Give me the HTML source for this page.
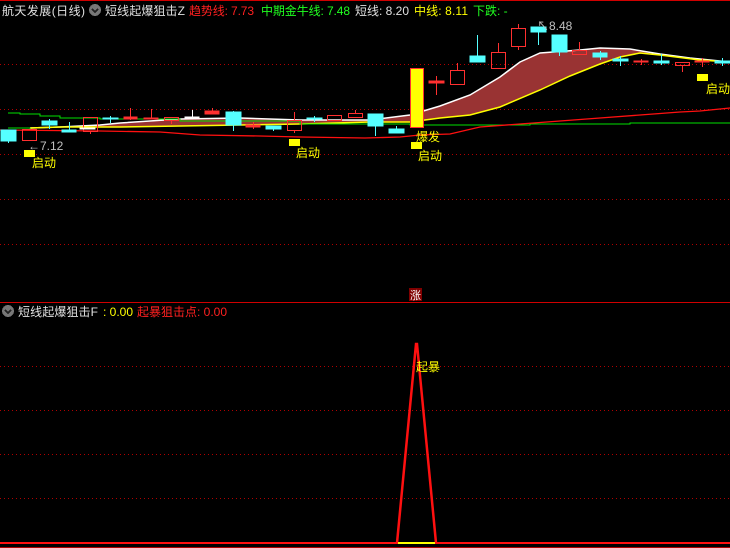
<!DOCTYPE html>
<html><head><meta charset="utf-8"><style>
html,body{margin:0;padding:0;background:#000;width:730px;height:548px;overflow:hidden}
svg text{font-family:"Liberation Sans","Noto Sans CJK SC",sans-serif}
</style></head><body>
<svg width="730" height="548" viewBox="0 0 730 548" xmlns="http://www.w3.org/2000/svg" shape-rendering="crispEdges">
<rect width="730" height="548" fill="#000"/>
<line x1="0" y1="0.5" x2="730" y2="0.5" stroke="#d00000"/>
<g stroke="#b00000" stroke-dasharray="1,3">
<line x1="0" y1="64.5" x2="730" y2="64.5"/><line x1="0" y1="109.5" x2="730" y2="109.5"/>
<line x1="0" y1="154.5" x2="730" y2="154.5"/><line x1="0" y1="199.5" x2="730" y2="199.5"/>
<line x1="0" y1="244.5" x2="730" y2="244.5"/>
<line x1="0" y1="366.5" x2="730" y2="366.5"/><line x1="0" y1="410.5" x2="730" y2="410.5"/>
<line x1="0" y1="454.5" x2="730" y2="454.5"/><line x1="0" y1="498.5" x2="730" y2="498.5"/>
</g>
<line x1="0" y1="302.5" x2="730" y2="302.5" stroke="#d00000"/>
<path d="M30,128 L60,127 L100,125 L120,123 L180,119 L240,118 L300,120 L370,120 L410,115 L440,106 L470,95 L500,77 L520,62 L540,53 L580,50 L600,48 L630,49 L660,54 L690,58 L730,62 L700,60 L660,55 L640,53 L620,57 L600,64 L570,76 L540,90 L500,107 L470,115 L440,118 L410,122 L370,122 L300,124 L240,125 L180,126 L120,127 L60,127 Z" fill="#993333" shape-rendering="auto"/>
<polyline points="30,128 60,127 100,125 120,123 180,119 240,118 300,120 370,120 410,115 440,106 470,95 500,77 520,62 540,53 580,50 600,48 630,49 660,54 690,58 730,62" fill="none" stroke="#fff" stroke-width="1.5" shape-rendering="auto"/>
<polyline points="30,128 60,127 120,127 180,126 240,125 300,124 370,122 410,122 440,118 470,115 500,107 540,90 570,76 600,64 620,57 640,53 660,55 700,60 730,62" fill="none" stroke="#ff0" stroke-width="1.5" shape-rendering="auto"/>
<polyline points="8,113 20,113 20,114 40,114 40,116 60,116 60,118 100,118 100,119 180,119 180,121 300,121 300,124 410,124 410,125 530,125 530,124 630,124 630,123 730,123" fill="none" stroke="#00e000"/>
<polyline points="8,128 30,128 30,129" fill="none" stroke="#00e000"/>
<polyline points="0,130 100,131 160,132 200,135 260,136 300,137 365,138 400,137 420,135 450,134 480,127 520,124 560,121 600,118 640,115 680,112 700,111 730,108" fill="none" stroke="#ff1010" stroke-width="1.3" shape-rendering="auto"/>
<g stroke-width="1">
<g fill="#55ffff" stroke="#55ffff">
<rect x="1" y="130" width="15" height="11"/><line x1="8.5" y1="141" x2="8.5" y2="143"/>
<rect x="42" y="121" width="15" height="4"/><line x1="49.5" y1="119" x2="49.5" y2="129"/>
<rect x="62" y="130" width="14" height="2"/><line x1="69.5" y1="122" x2="69.5" y2="132"/>
<rect x="103" y="118" width="15" height="1"/><line x1="110.5" y1="116" x2="110.5" y2="123"/>
<rect x="226" y="112" width="15" height="13"/><line x1="233.5" y1="111" x2="233.5" y2="131"/>
<rect x="266" y="126" width="15" height="3"/><line x1="273.5" y1="126" x2="273.5" y2="131"/>
<rect x="307" y="118" width="15" height="1"/><line x1="314.5" y1="116" x2="314.5" y2="122"/>
<rect x="368" y="114" width="15" height="12"/><line x1="375.5" y1="126" x2="375.5" y2="136"/>
<rect x="389" y="129" width="15" height="4"/><line x1="396.5" y1="126" x2="396.5" y2="133"/>
<rect x="470" y="56" width="15" height="6"/><line x1="477.5" y1="35" x2="477.5" y2="62"/>
<rect x="531" y="27" width="15" height="5"/><line x1="538.5" y1="32" x2="538.5" y2="45"/>
<rect x="552" y="35" width="15" height="17"/><line x1="559.5" y1="52" x2="559.5" y2="56"/>
<rect x="593" y="53" width="14" height="4"/><line x1="600.5" y1="51" x2="600.5" y2="60"/>
<rect x="613" y="59" width="15" height="2"/><line x1="620.5" y1="56" x2="620.5" y2="66"/>
<rect x="654" y="61" width="15" height="2"/><line x1="661.5" y1="54" x2="661.5" y2="65"/>
<rect x="715" y="61" width="15" height="2"/><line x1="722.5" y1="58" x2="722.5" y2="66"/>
</g>
<g fill="none" stroke="#ff3030">
<rect x="22.5" y="129.5" width="14" height="11"/>
<rect x="83.5" y="117.5" width="14" height="14"/><line x1="90.5" y1="132" x2="90.5" y2="134"/>
<rect x="164.5" y="117.5" width="14" height="3"/><line x1="171.5" y1="121" x2="171.5" y2="124"/>
<rect x="287.5" y="120.5" width="14" height="10"/><line x1="294.5" y1="112" x2="294.5" y2="120"/><line x1="294.5" y1="131" x2="294.5" y2="133"/>
<rect x="327.5" y="115.5" width="14" height="5"/>
<rect x="348.5" y="113.5" width="14" height="4"/><line x1="355.5" y1="110" x2="355.5" y2="113"/>
<rect x="450.5" y="70.5" width="14" height="14"/><line x1="457.5" y1="63" x2="457.5" y2="70"/>
<rect x="491.5" y="52.5" width="14" height="16"/><line x1="498.5" y1="43" x2="498.5" y2="52"/>
<rect x="511.5" y="28.5" width="14" height="18"/><line x1="518.5" y1="24" x2="518.5" y2="28"/><line x1="518.5" y1="47" x2="518.5" y2="50"/>
<rect x="572.5" y="50.5" width="14" height="4"/><line x1="579.5" y1="42" x2="579.5" y2="50"/>
<rect x="675.5" y="62.5" width="14" height="3"/><line x1="682.5" y1="66" x2="682.5" y2="72"/>
<rect x="410.5" y="68.5" width="13" height="59" fill="#ffff00"/>
</g>
<g fill="#ff3030" stroke="#ff3030">
<rect x="124" y="117" width="13" height="2"/><line x1="130.5" y1="108" x2="130.5" y2="120"/>
<rect x="144" y="118" width="14" height="1"/><line x1="151.5" y1="109" x2="151.5" y2="118"/>
<rect x="205" y="111" width="14" height="3"/><line x1="212.5" y1="108" x2="212.5" y2="111"/>
<rect x="246" y="125" width="14" height="2"/><line x1="253.5" y1="122" x2="253.5" y2="129"/>
<rect x="429" y="81" width="15" height="2"/><line x1="436.5" y1="76" x2="436.5" y2="95"/>
<rect x="634" y="61" width="14" height="1"/><line x1="641.5" y1="59" x2="641.5" y2="65"/>
<rect x="695" y="61" width="14" height="1"/><line x1="702.5" y1="58" x2="702.5" y2="67"/>
</g>
<g fill="#fff" stroke="#fff">
<rect x="80" y="128" width="15" height="1"/><rect x="185" y="117" width="14" height="1"/><line x1="192.5" y1="110" x2="192.5" y2="117"/>
</g>
</g>
<g fill="#ffff00">
<rect x="24" y="150" width="11" height="7"/><rect x="289" y="139" width="11" height="7"/>
<rect x="411" y="142" width="11" height="7"/><rect x="697" y="74" width="11" height="7"/>
</g>
<g font-size="12" fill="#ffff00">
<text x="32" y="167">启动</text><text x="296" y="157">启动</text>
<text x="416" y="141">爆发</text><text x="418" y="160">启动</text><text x="706" y="93">启动</text>
</g>
<text x="28" y="150" font-size="12" fill="#c0c0c0">←7.12</text>
<text x="537" y="30" font-size="12" fill="#c0c0c0">↖8.48</text>
<g font-size="12">
<text x="2" y="15" fill="#e0e0e0" textLength="83">航天发展(日线)</text>
<circle cx="95" cy="10" r="6" fill="#777"/><path d="M92,9 L95,12 L98,9" stroke="#222" stroke-width="1.5" fill="none"/>
<text x="105" y="15" fill="#e0e0e0" textLength="80">短线起爆狙击Z</text>
<text x="189" y="15" fill="#ff2020" textLength="65">趋势线: 7.73</text>
<text x="261" y="15" fill="#20ff20" textLength="89">中期金牛线: 7.48</text>
<text x="355" y="15" fill="#e0e0e0" textLength="54">短线: 8.20</text>
<text x="414" y="15" fill="#ffff00" textLength="54">中线: 8.11</text>
<text x="473" y="15" fill="#20ff20">下跌: -</text>
</g>
<rect x="409" y="288" width="13" height="13" fill="#800000"/>
<text x="410" y="299" font-size="11" fill="#fff">涨</text>
<g font-size="12">
<circle cx="8" cy="311" r="6" fill="#777"/><path d="M5,310 L8,313 L11,310" stroke="#222" stroke-width="1.5" fill="none"/>
<text x="18" y="316" fill="#e0e0e0" textLength="80">短线起爆狙击F</text>
<text x="103" y="316" fill="#ffff00">: 0.00</text>
<text x="137" y="316" fill="#ff2020" textLength="90">起暴狙击点: 0.00</text>
</g>
<polyline points="397,543 416,344 417,344 436,543" fill="none" stroke="#ff1010" stroke-width="2.5" shape-rendering="auto"/>
<line x1="0" y1="543" x2="730" y2="543" stroke="#ff1010" stroke-width="2"/>
<line x1="398" y1="543" x2="435" y2="543" stroke="#ffff00" stroke-width="2"/>
<line x1="0" y1="547.5" x2="730" y2="547.5" stroke="#b00000"/>
<text x="416" y="371" font-size="12" fill="#ffff00">起暴</text>
</svg>
</body></html>
